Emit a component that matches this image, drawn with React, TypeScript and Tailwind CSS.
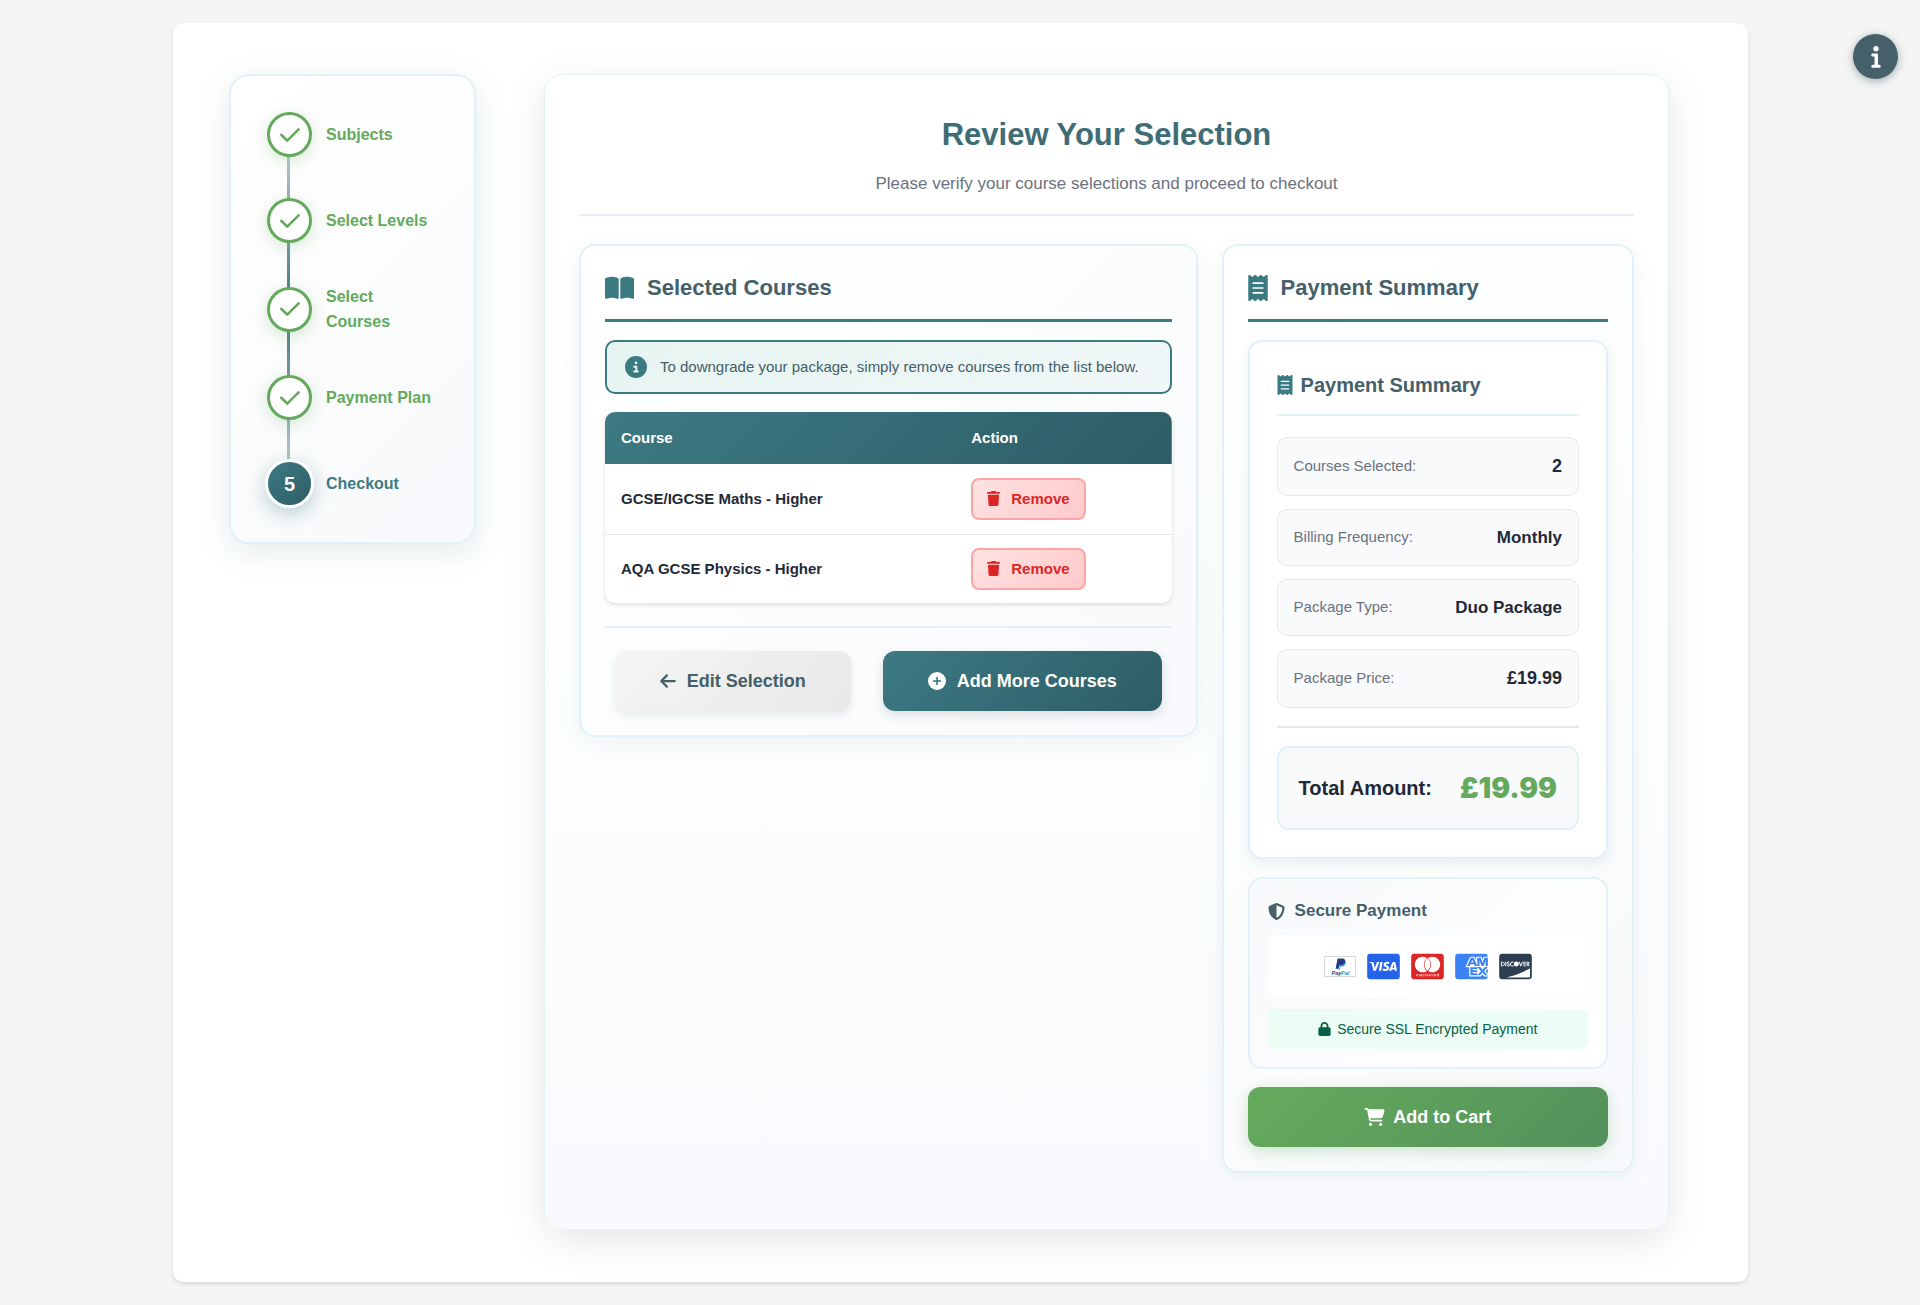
import type { ReactNode } from 'react'
import {
  FaArrowLeft,
  FaBookOpen,
  FaCartShopping,
  FaCcAmex,
  FaCcDiscover,
  FaCcMastercard,
  FaCcVisa,
  FaCircleInfo,
  FaLock,
  FaReceipt,
  FaShieldHalved,
  FaTrash,
} from 'react-icons/fa6'

const steps = ['Subjects', 'Select Levels', 'Select Courses', 'Payment Plan', 'Checkout']
const currentStep = 4

const courses = [
  { id: 'maths', name: 'GCSE/IGCSE Maths - Higher' },
  { id: 'physics', name: 'AQA GCSE Physics - Higher' },
]

const summary = [
  { label: 'Courses Selected:', value: '2', big: true },
  { label: 'Billing Frequency:', value: 'Monthly', big: false },
  { label: 'Package Type:', value: 'Duo Package', big: false },
  { label: 'Package Price:', value: '£19.99', big: true },
]

function Check() {
  return (
    <svg viewBox="0 0 20 14" className="w-5 h-[14px]" fill="none" stroke="currentColor" strokeWidth="2.6" strokeLinecap="round" strokeLinejoin="round">
      <path d="M1.3 6.800 L7.200 12.600 L18.600 1.400" />
    </svg>
  )
}

function PlusCircle() {
  return (
    <svg viewBox="0 0 18 18" className="size-[18px]">
      <circle cx="9" cy="9" r="9" fill="currentColor" />
      <path d="M9 5.500v7M5.500 9h7" stroke="#34707a" strokeWidth="1.500" strokeLinecap="round" />
    </svg>
  )
}

function InfoGlyph() {
  return (
    <svg viewBox="0 0 10 22" className="h-[22px] w-[10px]" fill="currentColor">
      <circle cx="5" cy="2.700" r="2.700" />
      <path d="M1.500 7.500h4.500q1 0 1 1V18.700h1.500q1.200 0 1.200 1.500t-1.200 1.500h-7q-1.200 0-1.200-1.500t1.200-1.500h2V10.600h-2Q.3 10.600.3 9t1.200-1.500z" />
    </svg>
  )
}

function PaypalMark() {
  return (
    <svg viewBox="0 0 32 21" className="h-[21px] w-8" role="img" aria-label="PayPal">
      <rect x="0.5" y="0.5" width="31" height="20" fill="#fff" stroke="#d5dade" />
      <path d="M13.6 2.5h4.6c2.3 0 3.5 1.3 3 3.6-.5 2.4-2 3.3-4.300 3.300h-1.600l-.7 3.400h-3z" fill="#253b80" />
      <path d="M21.300 5c.6.8.6 1.600.3 2.500-.6 2-2 2.900-4 2.900h-1.200l-.6 3h-2.200l.2-1h1.500l.7-3.200h1.600c2 0 3.300-1.200 3.700-4.200z" fill="#179bd7" />
      <text x="7.500" y="18.500" fontSize="5.500" fontWeight="700" fontStyle="italic" fill="#253b80">Pay</text>
      <text x="17" y="18.500" fontSize="5.500" fontWeight="700" fontStyle="italic" fill="#179bd7">Pal</text>
    </svg>
  )
}

function Stepper() {
  return (
    <nav className="w-[247px] shrink-0 rounded-[20px] border-2 border-[#e0f2f5] bg-linear-135 from-white via-[#fbfcfc] to-[#f8f9fc] p-9 shadow-[0_8px_32px_rgba(60,120,130,0.14)]">
      <ol className="relative flex flex-col gap-[41px]">
        <li aria-hidden className="absolute left-5 top-5 bottom-5 w-[3px] bg-linear-to-b from-[#c8d0d0] via-[#3c7a82] to-[#c8d0d0]" />
        {steps.map((label, i) => {
          const active = i === currentStep
          return (
            <li key={label} className="relative flex items-center gap-[14px]">
              {active ? (
                <span className="-m-[2px] flex size-[49px] shrink-0 items-center justify-center rounded-full border-[3px] border-white bg-linear-135 from-[#3d7a82] to-[#2d5d67] text-xl font-bold text-white shadow-[0_6px_20px_rgba(61,122,130,0.35)]">
                  {i + 1}
                </span>
              ) : (
                <span className="flex size-[45px] shrink-0 items-center justify-center rounded-full border-[3px] border-[#64a95c] bg-white text-[#64a95c] shadow-[0_4px_16px_rgba(100,169,92,0.25)]">
                  <Check />
                </span>
              )}
              <span className={`text-base leading-[25px] font-bold ${active ? 'text-[#3d7a82]' : 'text-[#64a95c]'}`}>{label}</span>
            </li>
          )
        })}
      </ol>
    </nav>
  )
}

function SectionTitle({ icon, children }: { icon: ReactNode; children: ReactNode }) {
  return (
    <h2 className="flex h-[52px] items-start gap-[13px] border-b-[3px] border-[#3c7a82] text-[22px] leading-9 font-bold text-[#456069]">
      <span className="flex h-9 items-center text-[#3c7a82]">{icon}</span>
      {children}
    </h2>
  )
}

function SelectedCourses() {
  return (
    <section className="rounded-2xl border-2 border-[#e0f2f5] bg-linear-135 from-white via-[#fbfdfd] to-[#f8f9fc] p-6 shadow-[0_4px_20px_rgba(60,120,130,0.08)]">
      <SectionTitle icon={<FaBookOpen className="h-[26px] w-[29px]" />}>Selected Courses</SectionTitle>
      <div className="mt-[18px] flex h-[54px] items-center gap-[13px] rounded-[10px] border-2 border-[#3c7a82] bg-linear-135 from-[#e6f4f1] to-[#f0f7f8] px-[18px] text-[15px] text-[#456069]">
        <FaCircleInfo className="size-[22px] shrink-0 text-[#3c7a82]" />
        To downgrade your package, simply remove courses from the list below.
      </div>
      <div className="mt-[18px] overflow-hidden rounded-[10px] bg-white shadow-[0_2px_4px_rgba(0,0,0,0.12)]">
        <table className="w-full table-fixed text-left text-[15px]">
          <thead>
            <tr className="h-[52px] bg-linear-135 from-[#3d7a82] to-[#2d5d67] text-white">
              <th className="w-[62%] px-4">Course</th>
              <th className="px-[15px]">Action</th>
            </tr>
          </thead>
          <tbody className="text-[#1f2937]">
            {courses.map((course) => (
              <tr key={course.id} className="h-[70px] border-b border-[#e5e7eb] last:h-[69px] last:border-0">
                <td className="px-4 font-bold">{course.name}</td>
                <td className="px-[15px]">
                  <button type="button" className="flex h-[42px] items-center gap-[11px] rounded-lg border-2 border-[#fca5a5] bg-linear-135 from-[#fee2e2] to-[#fecaca] px-[14px] font-bold text-[#dc2626]">
                    <FaTrash className="h-[15px] w-[13px]" />
                    Remove
                  </button>
                </td>
              </tr>
            ))}
          </tbody>
        </table>
      </div>
      <div className="mt-[23px] flex justify-center gap-8 border-t-2 border-[#e0f2f5] pt-[23px] text-lg font-bold">
        <button type="button" className="flex h-[60px] items-center justify-center gap-[11px] rounded-xl bg-linear-135 from-[#f5f5f5] to-[#e8e8e8] px-[45px] text-[#456069] shadow-[0_4px_8px_rgba(0,0,0,0.08)]">
          <FaArrowLeft className="h-[18px] w-4" />
          Edit Selection
        </button>
        <button type="button" className="flex h-[60px] items-center justify-center gap-[11px] rounded-xl bg-linear-135 from-[#3d7a82] to-[#2d5d67] px-[45px] text-white shadow-[0_4px_12px_rgba(0,0,0,0.12)]">
          <PlusCircle />
          Add More Courses
        </button>
      </div>
    </section>
  )
}

function PaymentSummary() {
  return (
    <section className="rounded-2xl border-2 border-[#e0f2f5] bg-linear-135 from-white via-[#fbfdfd] to-[#f8f9fc] p-6 shadow-[0_4px_20px_rgba(60,120,130,0.08)]">
      <SectionTitle icon={<FaReceipt className="h-[26px] w-5" />}>Payment Summary</SectionTitle>

      <div className="mt-[18px] rounded-[14px] border-2 border-[#e0f2f5] bg-white p-[27px] shadow-[0_4px_12px_rgba(60,120,130,0.1)]">
        <h3 className="flex h-[47px] items-start gap-2 border-b-2 border-[#e0f2f5] text-xl leading-8 font-bold text-[#456069]">
          <span className="flex h-8 items-center text-[#3c7a82]">
            <FaReceipt className="h-5 w-4" />
          </span>
          Payment Summary
        </h3>
        <dl className="mt-[21px] flex flex-col gap-[13px]">
          {summary.map((row) => (
            <div key={row.label} className="flex items-center justify-between rounded-[10px] border border-[#e5e7eb] bg-[#f9fafc] px-4 py-[14px]">
              <dt className="text-[15px] text-[#6b7280]">{row.label}</dt>
              <dd className={`font-bold text-[#1f2937] ${row.big ? 'text-lg leading-[29px]' : 'text-[17px] leading-[27px]'}`}>{row.value}</dd>
            </div>
          ))}
        </dl>
        <div className="mt-[18px] border-t-2 border-[#e5e7eb] pt-[18px]">
          <div className="flex h-[84px] items-center justify-between rounded-xl border-2 border-[#e0f2f5] bg-[#f9fafc] px-5">
            <span className="text-xl font-bold text-[#1f2937]">Total Amount:</span>
            <span className="font-['Inter','Liberation_Sans',sans-serif] text-[28px] font-black text-[#64a95c]">£19.99</span>
          </div>
        </div>
      </div>

      <div className="mt-[18px] rounded-[14px] border-2 border-[#e0f2f5] bg-linear-135 from-[#f8f9fc] to-white p-[18px]">
        <h3 className="flex items-center gap-[10px] text-[17px] leading-7 font-bold text-[#456069]">
          <FaShieldHalved className="size-[17px]" />
          Secure Payment
        </h3>
        <div className="mt-[10px] flex h-[63px] items-center justify-center gap-[11px] rounded-[10px] bg-white">
          <PaypalMark />
          <FaCcVisa className="h-[29px] w-[33px] text-[#2563eb]" />
          <FaCcMastercard className="h-[29px] w-[33px] text-[#dc2626]" />
          <FaCcAmex className="h-[29px] w-[33px] text-[#3b82f6]" />
          <FaCcDiscover className="h-[29px] w-[33px] text-[#2c3e50]" />
        </div>
        <p className="mt-[11px] flex h-10 items-center justify-center gap-[6px] rounded-lg bg-[#ecfdf5] text-sm text-[#065f46]">
          <FaLock className="h-[14px] w-[13px]" />
          Secure SSL Encrypted Payment
        </p>
      </div>

      <button type="button" className="mt-[18px] flex h-[60px] w-full items-center justify-center gap-2 rounded-xl bg-linear-135 from-[#66ab5c] to-[#52915b] text-lg font-bold text-white shadow-[0_4px_16px_rgba(100,169,92,0.3)]">
        <FaCartShopping className="h-[18px] w-[21px]" />
        Add to Cart
      </button>
    </section>
  )
}

export default function App() {
  return (
    <div className="min-h-screen bg-[#f5f5f5] pt-[23px] pb-[22px] font-['Liberation_Sans',Arial,sans-serif]">
      <div className="mr-[172px] ml-[173px] flex items-start rounded-[10px] bg-white pt-[51px] pr-[79px] pb-[52px] pl-14 shadow-[0_2px_4px_rgba(0,0,0,0.12)]">
        <Stepper />
        <main className="ml-[68px] min-w-0 flex-1 rounded-[20px] border border-[#e4f2f3] bg-linear-to-b from-white via-[#fcfefd] to-[#f9fafd] px-[34px] pt-8 pb-14 shadow-[0_10px_40px_rgba(0,0,0,0.1)]">
          <header className="border-b-2 border-[#e0f2f5] pb-4 text-center">
            <h1 className="text-[31px] leading-[55px] font-bold text-[#3f6d76]">Review Your Selection</h1>
            <p className="mt-2 text-[17px] leading-7 text-[#6b7280]">Please verify your course selections and proceed to checkout</p>
          </header>
          <div className="mt-7 grid grid-cols-[3fr_2fr] items-start gap-6">
            <SelectedCourses />
            <PaymentSummary />
          </div>
        </main>
      </div>
      <button type="button" aria-label="Information" className="fixed top-[34px] right-[22px] flex size-[45px] items-center justify-center rounded-full bg-[#456069] text-white shadow-[0_2px_8px_rgba(69,96,105,0.5)]">
        <InfoGlyph />
      </button>
    </div>
  )
}
